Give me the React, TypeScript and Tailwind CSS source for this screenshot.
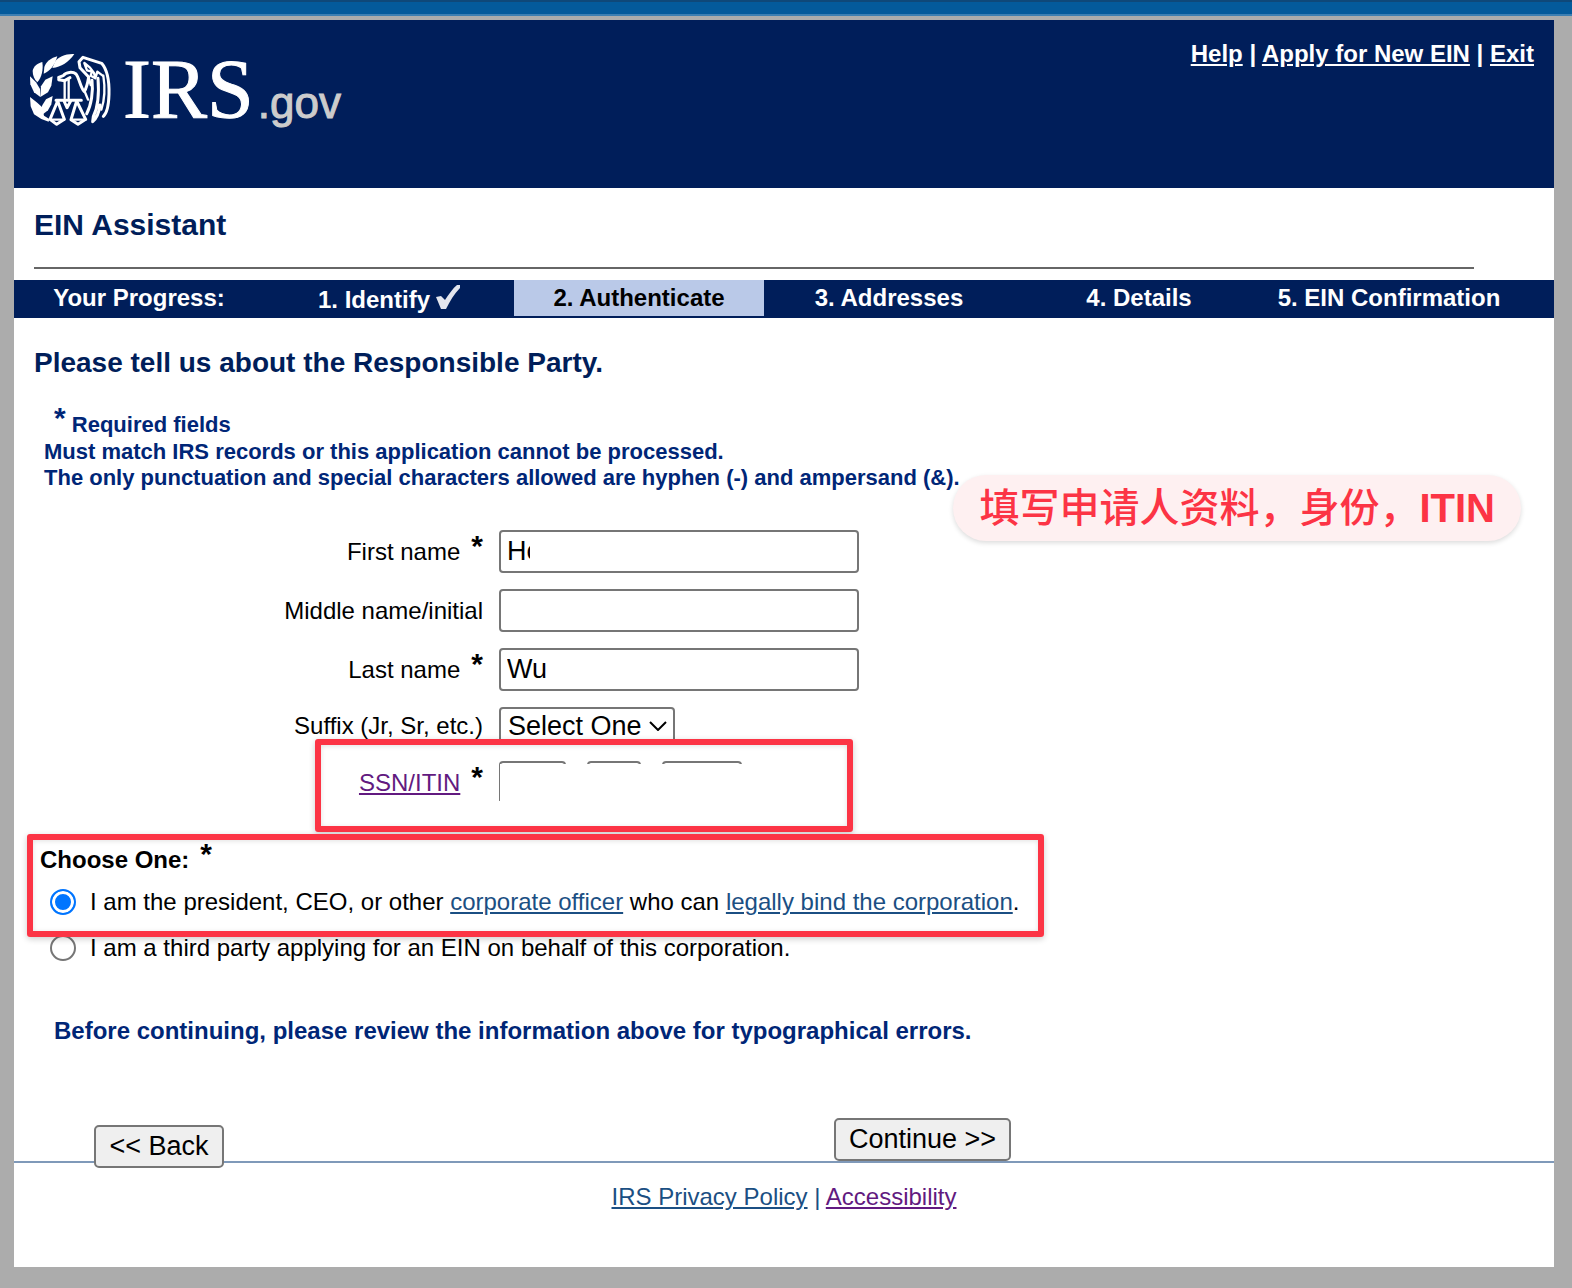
import type { ReactNode } from "react";

const steps = [
  { label: "1. Identify", done: true, current: false },
  { label: "2. Authenticate", done: false, current: true },
  { label: "3. Addresses", done: false, current: false },
  { label: "4. Details", done: false, current: false },
  { label: "5. EIN Confirmation", done: false, current: false },
];

const inputClass =
  "h-[43px] rounded-[4px] border-2 border-[#767676] bg-white px-[6px] text-[27px] leading-8 text-black";

const radioClass =
  "h-[26px] w-[26px] shrink-0 appearance-none rounded-full border-2 border-[#767676] bg-white checked:border-[#0075ff] checked:bg-[#0075ff] checked:shadow-[inset_0_0_0_3px_white]";

const buttonClass =
  "h-[43px] rounded-[5px] border-2 border-[#767676] bg-[#efefef] pb-[2px] text-[27px] leading-8 whitespace-nowrap text-black";

const Star = () => <span className="ml-[11px] align-[4px] text-[30px] leading-[0] font-bold">*</span>;

const Highlight = ({ className }: { className: string }) => (
  <div
    aria-hidden="true"
    className={`pointer-events-none absolute rounded-[3px] border-[6px] border-[#fc3445] shadow-[0_2px_6px_rgba(0,0,0,0.2),inset_0_1px_5px_rgba(0,0,0,0.12)] ${className}`}
  />
);

const EagleLogo = () => (
  <svg viewBox="30 24 246 219" className="mt-[5px] h-[73px] w-[82px]" aria-hidden="true">
    <g fill="#fff">
      <path d="M163 27C140 25 112 36 105 50L97 69C124 66 146 52 163 27Z" />
      <path d="M112 34C94 38 77 52 73 66L71 86C91 78 105 60 112 34Z" />
      <path d="M67 51C54 54 40 64 38 78C38 91 43 103 52 112C66 96 70 74 67 51Z" />
      <path d="M30 94L31 118L42 142L61 156L60 132L48 112Z" />
      <path d="M98 94L76 104L63 124L61 156L84 142L94 122Z" />
      <path d="M30 156L32 184L42 208L64 222L86 230L88 222L72 212L66 186L50 172Z" />
      <path d="M98 153L78 163L66 182L66 210L84 196L94 178Z" />
    </g>
    <g fill="none" stroke="#fff" strokeWidth="9" strokeLinejoin="round" strokeLinecap="round">
      <path d="M117 104L116 97L130 92C138 81 158 79 168 87C177 97 182 130 193 140C202 124 204 108 206 96L180 68L177 50L189 37L245 55C262 75 268 112 267 148C266 182 262 204 250 214" />
      <path d="M117 104L134 107L150 98" />
      <path d="M134 108V160M146 104V160" strokeWidth="7" />
      <path d="M108 166H184M132 168L141 188L152 168" />
      <path d="M113 168L90 223L110 238L133 223Z" />
      <path d="M170 168L153 224L174 238L197 223Z" />
      <path d="M92 224H132M154 224H196" strokeWidth="7" />
      <path d="M193 54L201 76L216 80L212 92L226 100L222 84L210 68ZM206 96L212 120M226 100L232 80L248 92" strokeWidth="7" />
      <path d="M216 106C220 140 214 180 200 206" />
      <path d="M234 100C238 150 232 190 220 214M220 214L218 230C234 216 238 196 240 180" />
      <path d="M250 92C256 130 252 170 244 194" strokeWidth="7" />
      <path d="M196 144L204 164" strokeWidth="7" />
    </g>
  </svg>
);

const CheckMark = () => (
  <svg viewBox="0 0 24 24" className="mb-[2px] h-6 w-6" aria-hidden="true">
    <path d="M0 12L5 11L9 15C13 9 17 3 21 0L24 0V3C18 9 14 16 10 24H5Z" fill="#e3e6ee" />
  </svg>
);

const Row = ({ label, children }: { label: ReactNode; children: ReactNode }) => (
  <div className="relative grid grid-cols-[469px_1fr] items-center gap-x-4">
    <div className="text-right leading-7">{label}</div>
    <div className="flex">{children}</div>
  </div>
);

const App = () => {
  return (
    <div className="flex min-h-screen flex-col bg-[#acacac] font-['Liberation_Sans',Arial,sans-serif] text-2xl leading-7 text-black">
      <div className="h-4 border-t-2 border-b-2 border-t-[#0f4879] border-b-[#3d7fb2] bg-[#045a9b]" />

      <div className="mt-1 mr-[18px] mb-5 ml-[14px] bg-white">
        <header className="flex h-[168px] items-start justify-between bg-[#001e5a] pt-5 pr-5 pl-4 text-white">
          <a href="#home" className="mt-2 flex items-start gap-[11px]" aria-label="IRS.gov">
            <EagleLogo />
            <span className="flex items-baseline gap-1">
              <span className="font-['Liberation_Serif','Times_New_Roman',serif] text-[84px] leading-none [-webkit-text-stroke:1px_white]">IRS</span>
              <span className="text-[44px] leading-none text-[#cccccc] [-webkit-text-stroke:1px_#cccccc]">.gov</span>
            </span>
          </a>
          <nav className="font-bold">
            <a href="#help" className="underline">Help</a> |{" "}
            <a href="#apply" className="underline">Apply for New EIN</a> |{" "}
            <a href="#exit" className="underline">Exit</a>
          </nav>
        </header>

        <h1 className="pt-[19px] pl-5 text-[30px] leading-9 font-bold text-[#001e5a]">EIN Assistant</h1>
        <hr className="mt-6 mr-20 ml-5 border-t-2 border-[#666666]" />

        <ol className="mt-[11px] grid h-[38px] grid-cols-6 bg-[#001e5a] pr-10 font-bold text-white">
          <li className="flex h-9 items-center justify-center">Your Progress:</li>
          {steps.map((step) => (
            <li
              key={step.label}
              aria-current={step.current ? "step" : undefined}
              className={`flex h-9 items-center justify-center gap-[6px] ${step.current ? "bg-[#bac9e8] text-black" : ""}`}
            >
              {step.done ? <span className="pt-1">{step.label}</span> : step.label}
              {step.done && <CheckMark />}
            </li>
          ))}
        </ol>

        <form onSubmit={(e) => e.preventDefault()}>
          <h2 className="pt-[29px] pl-5 text-[28px] leading-8 font-bold text-[#001e5a]">
            Please tell us about the Responsible Party.
          </h2>

          <div className="relative mt-8 pl-[30px] text-[22px] leading-[26px] font-bold text-[#002677]">
            <p className="pl-[10px] leading-7">
              <span className="align-[4px] text-[30px] leading-[0]">*</span> Required fields
            </p>
            <p>Must match IRS records or this application cannot be processed.</p>
            <p>The only punctuation and special characters allowed are hyphen (-) and ampersand (&amp;).</p>
            <div className="absolute top-16 right-[33px] flex h-[66px] items-center rounded-full bg-[#fef0f1] px-[26px] font-['Liberation_Sans','Noto_Sans_CJK_SC',sans-serif] text-[40px] leading-none whitespace-nowrap text-[#fc3445] shadow-[0_2px_5px_rgba(0,0,0,0.14)]">
              <span className="font-medium">填写申请人资料，身份，</span>
              <span>ITIN</span>
            </div>
          </div>

          <div className="mt-[39px] flex flex-col gap-4">
            <Row label={<label htmlFor="first">First name<Star /></label>}>
              <div className="relative flex">
                <input id="first" type="text" defaultValue="Ho" className={`${inputClass} w-[360px]`} />
                <span className="pointer-events-none absolute top-2 left-[31px] h-7 w-6 bg-white" />
              </div>
            </Row>
            <Row label={<label htmlFor="middle">Middle name/initial</label>}>
              <input id="middle" type="text" className={`${inputClass} w-[360px]`} />
            </Row>
            <Row label={<label htmlFor="last">Last name<Star /></label>}>
              <input id="last" type="text" defaultValue="Wu" className={`${inputClass} w-[360px]`} />
            </Row>
            <Row label={<label htmlFor="suffix">Suffix (Jr, Sr, etc.)</label>}>
              <div className="relative flex">
                <select
                  id="suffix"
                  className="h-[38px] w-[176px] appearance-none rounded-[4px] border-2 border-[#767676] bg-white pl-[7px] text-[27px] leading-8"
                >
                  <option>Select One</option>
                </select>
                <svg viewBox="0 0 18 10" className="pointer-events-none absolute top-[14px] right-2 h-[10px] w-[18px]" aria-hidden="true">
                  <path d="M1 1L9 9L17 1" fill="none" stroke="#000" strokeWidth="2" />
                </svg>
              </div>
            </Row>
            <Row
              label={
                <>
                  <a href="#ssn" className="text-[#621a80] underline">SSN/ITIN</a>
                  <Star />
                </>
              }
            >
              <div className="relative flex gap-[21px]">
                <input type="text" aria-label="SSN/ITIN area" className={`${inputClass} w-[67px]`} />
                <input type="text" aria-label="SSN/ITIN group" className={`${inputClass} w-[54px]`} />
                <input type="text" aria-label="SSN/ITIN serial" className={`${inputClass} w-[80px]`} />
                <span className="pointer-events-none absolute top-[3px] -right-1 bottom-0 left-px bg-white" />
                <span className="pointer-events-none absolute right-0 bottom-0 left-0 h-[3px] bg-white" />
              </div>
              <Highlight className="-top-[22px] left-[301px] h-[93px] w-[538px]" />
            </Row>
          </div>

          <div className="relative mt-[42px]">
            <fieldset>
              <legend className="pl-[26px] font-bold">
                Choose One:
                <Star />
              </legend>
              <div className="mt-[15px] flex flex-col gap-5 pl-9 leading-[26px]">
                <div className="flex items-center gap-[14px]">
                  <input id="officer" type="radio" name="role" defaultChecked className={radioClass} />
                  <label htmlFor="officer">
                    I am the president, CEO, or other{" "}
                    <a href="#officer" className="text-[#1b4f83] underline">corporate officer</a> who can{" "}
                    <a href="#bind" className="text-[#1b4f83] underline">legally bind the corporation</a>.
                  </label>
                </div>
                <div className="flex items-center gap-[14px]">
                  <input id="third" type="radio" name="role" className={radioClass} />
                  <label htmlFor="third">I am a third party applying for an EIN on behalf of this corporation.</label>
                </div>
              </div>
            </fieldset>
            <Highlight className="-top-3 left-[13px] h-[103px] w-[1017px]" />
          </div>

          <p className="mt-14 pl-10 font-bold text-[#002677]">
            Before continuing, please review the information above for typographical errors.
          </p>

          <div className="mt-[73px] flex h-[43px] items-start gap-[610px] pl-20">
            <button type="button" className={`${buttonClass} relative mt-[7px] w-[130px]`}>&lt;&lt; Back</button>
            <button type="submit" className={`${buttonClass} w-[177px]`}>Continue &gt;&gt;</button>
          </div>
        </form>

        <footer className="border-t-2 border-[#7f99b9] pt-5 pb-14 text-center text-[#1b4f83]">
          <a href="#privacy" className="underline">IRS Privacy Policy</a> |{" "}
          <a href="#accessibility" className="text-[#621a80] underline">Accessibility</a>
        </footer>
      </div>
    </div>
  );
};

export default App;
